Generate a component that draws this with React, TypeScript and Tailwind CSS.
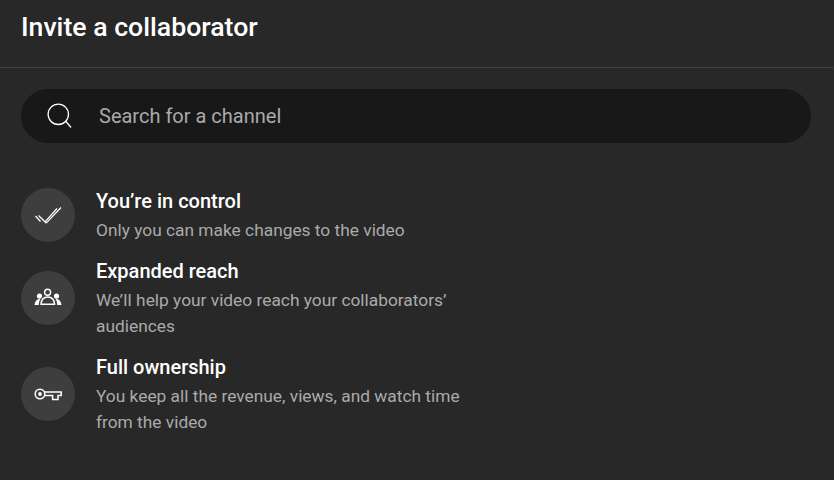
const font = { fontFamily: "Roboto, sans-serif" };

function Check() {
  return (
    <svg width="28" height="28" viewBox="0 0 28 28" fill="none" stroke="#fff" strokeWidth="1.2">
      <path d="M1.5 15 L6.5 20.5" />
      <path d="M4.5 14.5 L11 20.8 L23 7.5" />
      <path d="M11 21.6 L12.6 21.6 L27 6.5" />
    </svg>
  );
}

function People() {
  return (
    <svg width="28" height="28" viewBox="0 0 28 28" fill="none">
      <circle cx="13.6" cy="8.3" r="3" stroke="#fff" strokeWidth="1.4" />
      <path d="M7 20.2 C7.3 15.4 10 13 13.8 13 C17.6 13 20.3 15.4 20.6 20.2 Z" stroke="#fff" strokeWidth="1.4" />
      <circle cx="5.5" cy="12" r="2.6" fill="#fff" />
      <circle cx="22.5" cy="12" r="2.6" fill="#fff" />
      <path d="M0.5 20.9 C1 17.5 2.8 14.8 6.8 14.5 C5.6 16 4.9 18 4.7 20.9 Z" fill="#fff" />
      <path d="M27.5 20.9 C27 17.5 25.2 14.8 21.2 14.5 C22.4 16 23.1 18 23.3 20.9 Z" fill="#fff" />
    </svg>
  );
}

function Key() {
  return (
    <svg width="28" height="28" viewBox="0 0 28 28" fill="none" stroke="#fff" strokeWidth="1.5">
      <circle cx="6" cy="14" r="4.8" />
      <circle cx="6" cy="14" r="1.9" fill="#fff" stroke="none" />
      <path d="M10.6 12 H27.2 V15.6 H24 V19.6 H18.6 V15.6 H10.6" />
    </svg>
  );
}

function Search() {
  return (
    <svg width="26" height="26" viewBox="0 0 26 26" fill="none" stroke="#fff" strokeWidth="1.3">
      <circle cx="12.3" cy="11.3" r="10.2" />
      <path d="M20 18.5 L25 24.5" />
    </svg>
  );
}

const rows = [
  { icon: <Check />, title: "You’re in control", sub: "Only you can make changes to the video" },
  { icon: <People />, title: "Expanded reach", sub: "We’ll help your video reach your collaborators’ audiences" },
  { icon: <Key />, title: "Full ownership", sub: "You keep all the revenue, views, and watch time from the video" },
];

export default function App() {
  return (
    <div className="w-[834px] h-[480px] overflow-hidden bg-[#282828]" style={font}>
      <div className="h-[68px] border-b border-[#3f3f3f] px-[21px] pt-[9px]">
        <h1 className="text-[26.67px] leading-[36px] font-medium text-white">Invite a collaborator</h1>
      </div>
      <div className="pl-[21px] pr-[23px] pt-[21px]">
        <div className="h-[54px] rounded-[27px] bg-[#181818] flex items-center pl-[25px] gap-[27px]">
          <Search />
          <span className="text-[20px] text-[#aaaaaa]">Search for a channel</span>
        </div>
        <div className="mt-[45px] flex flex-col gap-[15px]">
          {rows.map((r) => (
            <div key={r.title} className="flex items-center gap-[21px]">
              <div className="w-[54px] h-[54px] -translate-y-px rounded-full bg-[#3e3e3e] flex items-center justify-center shrink-0">
                {r.icon}
              </div>
              <div className="w-[370px]">
                <div className="text-[20px] leading-[26px] font-medium text-white">{r.title}</div>
                <div className="mt-[3px] text-[17.33px] leading-[26px] text-[#aaaaaa]">{r.sub}</div>
              </div>
            </div>
          ))}
        </div>
      </div>
    </div>
  );
}
